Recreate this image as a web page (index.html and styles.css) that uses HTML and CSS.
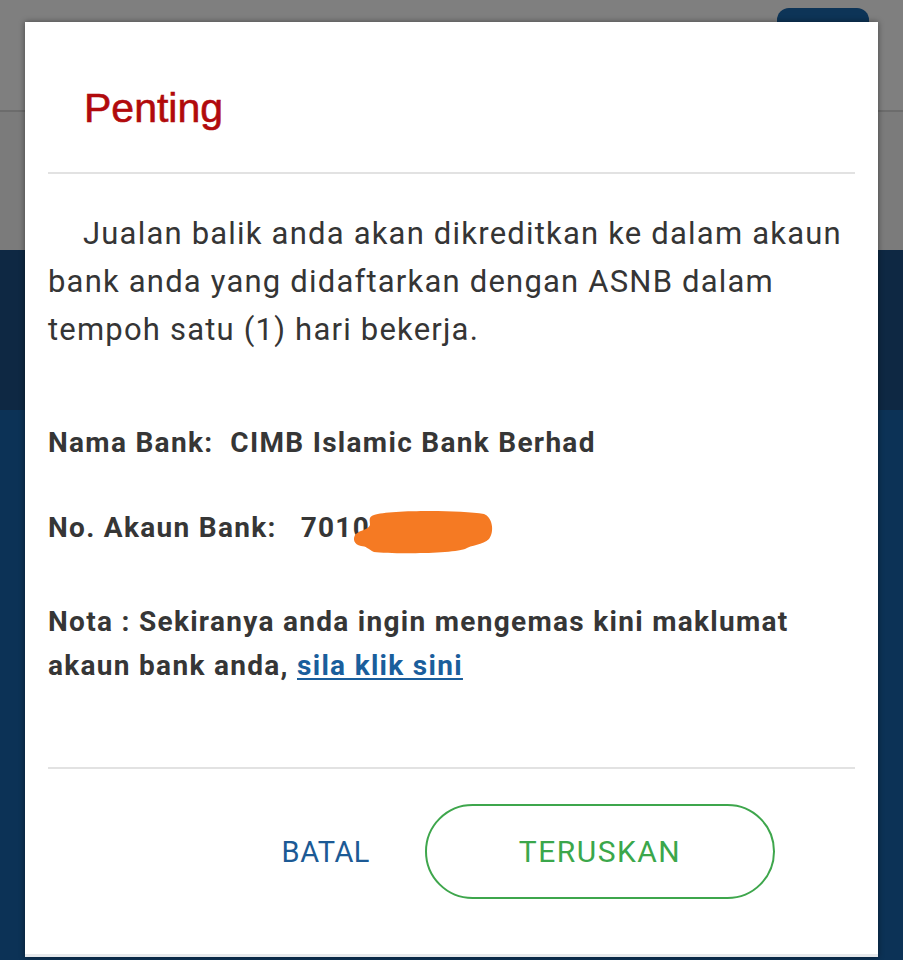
FILE: index.html
```html
<!DOCTYPE html>
<html lang="ms">
<head>
<meta charset="utf-8">
<title>Penting</title>
<link rel="stylesheet" href="styles.css">
</head>
<body>
<div class="app">
  <header class="topbar"><div class="topbtn"></div></header>
  <div class="subbar"></div>
  <div class="band"></div>
  <div class="content"></div>
</div>

<div class="modal" role="dialog">
  <h1 class="title">Penting</h1>
  <hr class="sep sep-top">
  <p class="intro">Jualan balik anda akan dikreditkan ke dalam akaun<br>bank anda yang didaftarkan dengan ASNB dalam<br>tempoh satu (1) hari bekerja.</p>
  <div class="row row-bank">Nama Bank:<span class="val val-bank">CIMB Islamic Bank Berhad</span></div>
  <div class="row row-acc">No. Akaun Bank:<span class="val val-acc">7010</span>
    <svg class="scribble" viewBox="0 0 145 46" width="145" height="46"><path d="M24 6 C40 1 110 1 134 5 C142 8 145 22 139 30 C133 36 121 36 115 40 C100 45 40 45 24 43 C18 40 16 37 11 37 C4 36 2 29 6 25 C10 21 18 21 20 16 C20 11 18 8 24 6 Z" fill="#f57a23"/></svg>
  </div>
  <p class="row note">Nota : Sekiranya anda ingin mengemas kini maklumat<br>akaun bank anda, <a class="link" href="#">sila klik sini</a></p>
  <hr class="sep sep-bottom">
  <div class="actions">
    <button class="btn-cancel" type="button">BATAL</button>
    <button class="btn-go" type="button">TERUSKAN</button>
  </div>
</div>
</body>
</html>
```

FILE: styles.css
```css
html, body {
  margin: 0;
  padding: 0;
}
body {
  width: 903px;
  height: 960px;
  overflow: hidden;
  position: relative;
  font-family: Roboto, "Noto Sans", sans-serif;
}
.app {
  display: flex;
  flex-direction: column;
  height: 960px;
}
.topbar {
  height: 112px;
  background: #7f7f7f;
  border-bottom: 2px solid #6c6c6c;
  box-sizing: border-box;
  display: flex;
  justify-content: flex-end;
  align-items: flex-start;
  padding: 8px 34px 0 0;
}
.topbtn {
  width: 92px;
  height: 60px;
  background: #0d3457;
  border-radius: 12px;
}
.subbar {
  height: 138px;
  background: #7b7b7b;
}
.band {
  height: 160px;
  background: #0e2843;
}
.content {
  flex: 1;
  background: #0c3256;
}

.modal {
  position: absolute;
  top: 22px;
  left: 25px;
  width: 853px;
  height: 935px;
  box-sizing: border-box;
  background: #fff;
  box-shadow: 0 0 6px rgba(0,0,0,0.45);
  border-bottom: 3px solid #e6e9ec;
  padding: 62px 23px 0 23px;
  display: flex;
  flex-direction: column;
  color: #363636;
}
.title {
  margin: 0 0 40px 36px;
  font-family: "Liberation Sans", Arial, sans-serif;
  font-weight: normal;
  font-size: 41px;
  line-height: 48px;
  color: #b10a0c;
  -webkit-text-stroke: 0.6px #b10a0c;
}
.sep {
  border: 0;
  height: 2px;
  background: #e2e2e2;
  margin: 0;
}
.intro {
  margin: 36px 0 0 0;
  font-size: 31px;
  letter-spacing: 1.2px;
  line-height: 48px;
  text-indent: 35px;
  white-space: nowrap;
  color: #353535;
}
.row {
  position: relative;
  margin: 0;
  font-weight: bold;
  font-size: 28px;
  letter-spacing: 1.3px;
  line-height: 36px;
  white-space: nowrap;
  color: #363636;
}
.row-bank { margin-top: 71px; }
.row-acc { margin-top: 49px; }
.val-bank { margin-left: 17px; }
.val-acc { margin-left: 24px; }
.scribble {
  position: absolute;
  left: 302px;
  top: -1px;
}
.note {
  margin-top: 54px;
  line-height: 44px;
}
.link {
  color: #1a5e9c;
  text-decoration: underline;
  text-decoration-thickness: 2px;
  text-underline-offset: 3px;
}
.sep-bottom {
  margin-top: 79px;
}
.actions {
  margin-top: 35px;
  display: flex;
  justify-content: flex-end;
  align-items: center;
  padding-right: 80px;
}
.btn-cancel {
  background: none;
  border: 0;
  padding: 0;
  margin-right: 55px;
  font-family: Roboto, sans-serif;
  font-size: 29px;
  letter-spacing: 0.5px;
  color: #1c5a95;
}
.btn-go {
  width: 350px;
  height: 95px;
  box-sizing: border-box;
  background: #fff;
  border: 2.5px solid #3ea64c;
  border-radius: 48px;
  font-family: Roboto, sans-serif;
  font-size: 30px;
  letter-spacing: 1.5px;
  color: #3ba74b;
}
```
